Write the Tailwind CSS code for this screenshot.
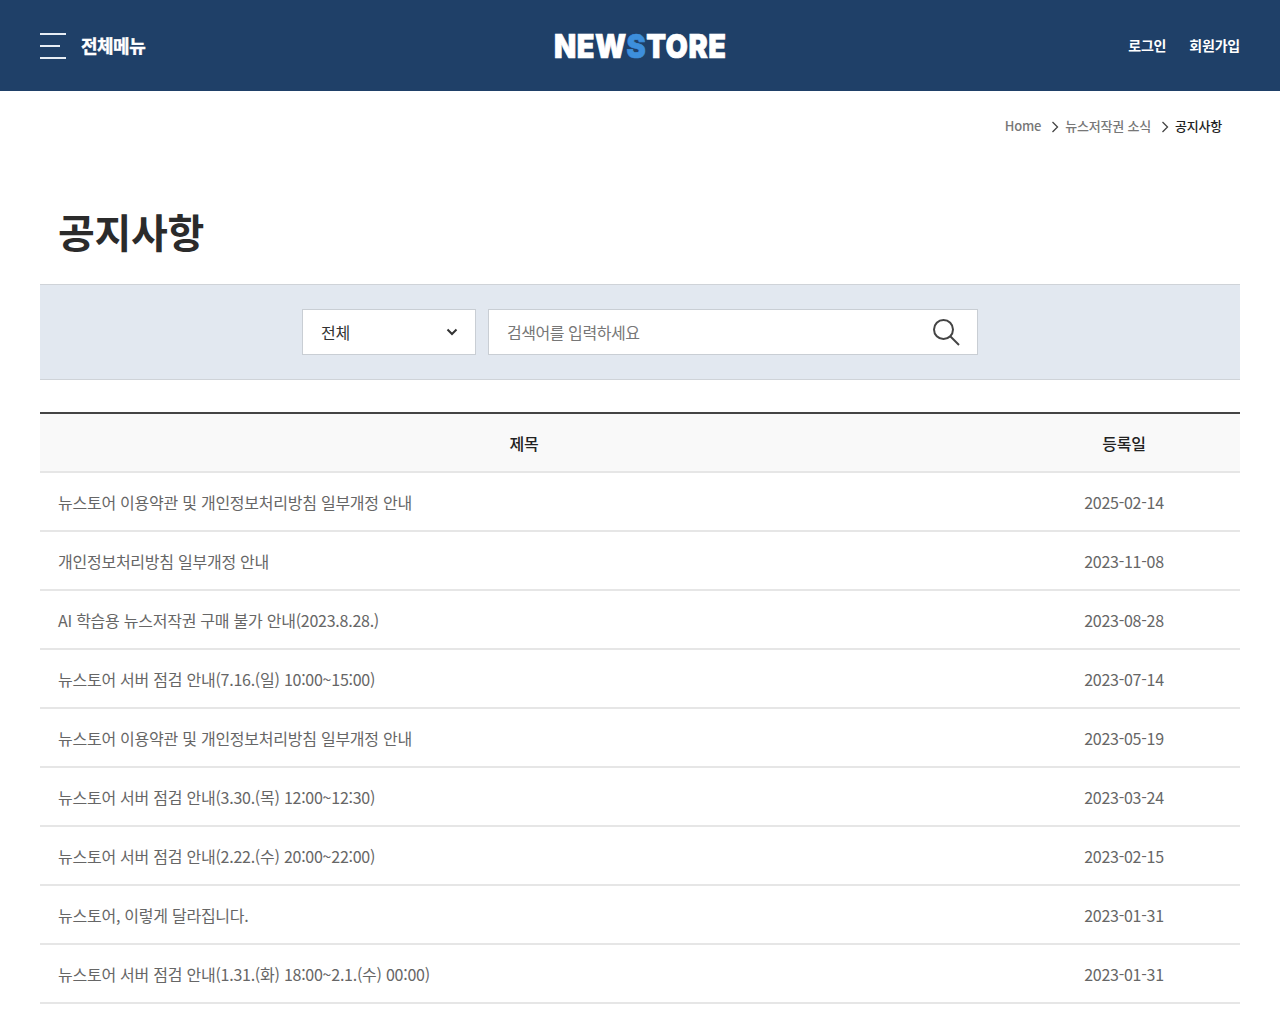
<!DOCTYPE html>
<html lang="ko"><head><meta charset="utf-8"><script src="https://cdn.jsdelivr.net/npm/@tailwindcss/browser@4"></script><title>공지사항</title></head>
<body class="bg-white font-['Noto_Sans_CJK_KR','Noto_Sans',sans-serif] overflow-hidden">
<header class="h-[91px] bg-[#1f4068] px-10 flex items-center justify-between relative">
  <div class="flex items-center gap-[15px]">
    <div class="w-[26px] h-[26px] flex flex-col justify-between">
      <span class="block h-[2px] w-[26px] bg-[#e6edf5]"></span>
      <span class="block h-[2px] w-5 bg-[#e6edf5]"></span>
      <span class="block h-[2px] w-[26px] bg-[#e6edf5]"></span>
    </div>
    <span class="text-white text-[18px] font-bold tracking-[-0.5px] [-webkit-text-stroke:0.4px_white]">전체메뉴</span>
  </div>
  <div class="absolute left-[554px] top-[26px] h-10 leading-10 text-white text-[33px] font-black font-['Inter',sans-serif] tracking-[0.6px] [-webkit-text-stroke:0.7px_white] origin-left scale-x-[0.875]">NEW<span class="text-[#3d8fdc] [-webkit-text-stroke:0.7px_#3d8fdc]">S</span>TORE</div>
  <div class="flex gap-[23px] text-white text-sm font-bold tracking-[-0.2px] -mt-[2px]"><span>로그인</span><span>회원가입</span></div>
</header>
<nav class="h-[70px] pt-[24px] pr-[58px] flex justify-end items-start text-[13px] leading-[22px] tracking-[-0.2px] text-[#777] font-medium">
  <span>Home</span>
  <svg class="w-2 h-[12px] ml-[10px] mr-[6px] mt-[6px]" viewBox="0 0 8 12" fill="none" stroke="#444" stroke-width="1.3"><path d="M1.5 1l5 5-5 5"/></svg>
  <span>뉴스저작권 소식</span>
  <svg class="w-2 h-[12px] ml-[10px] mr-[6px] mt-[6px]" viewBox="0 0 8 12" fill="none" stroke="#444" stroke-width="1.3"><path d="M1.5 1l5 5-5 5"/></svg>
  <span class="text-[#222]">공지사항</span>
</nav>
<main class="px-10">
  <h1 class="pl-[18px] h-[123px] pt-[37px] text-[40px] leading-[66px] font-bold tracking-[-0.3px] text-[#2b2b2b]">공지사항</h1>
  <section class="h-[96px] bg-[#e2e8f0] border-y border-[#cfd3d8] flex justify-center items-center gap-3">
    <div class="w-[174px] h-[46px] bg-white border border-[#c9ced4] pl-[18px] pr-4 flex items-center justify-between text-[16px] text-[#333] tracking-[-0.25px]">
      <span>전체</span>
      <svg class="w-[14px] h-[14px]" viewBox="0 0 14 14" fill="none" stroke="#333" stroke-width="2"><path d="M2.5 4.5L7 9l4.5-4.5"/></svg>
    </div>
    <div class="w-[490px] h-[46px] bg-white border border-[#c9ced4] pl-[18px] pr-[17px] flex items-center justify-between text-[16px] text-[#777] tracking-[-0.45px]">
      <span>검색어를 입력하세요</span>
      <svg class="w-[28px] h-[28px]" viewBox="0 0 28 28" fill="none" stroke="#444" stroke-width="2"><circle cx="11.5" cy="11.5" r="9.5"/><path d="M18.5 18.5l8.5 8.5"/></svg>
    </div>
  </section>
  <table class="w-full mt-8 border-t-2 border-[#444] table-fixed border-collapse text-[16px] tracking-[-0.25px]">
    <colgroup><col class="w-[968px]"><col></colgroup>
    <thead><tr class="h-[59px] bg-[#f9f9f9] border-b-2 border-[#e6e6e6] text-[#222]"><th class="font-medium pt-[1px]">제목</th><th class="font-medium pt-[1px]">등록일</th></tr></thead>
    <tbody class="text-[#666]">
      <tr class="h-[59px] border-b-2 border-[#e6e6e6]"><td class="pl-[18px]">뉴스토어 이용약관 및 개인정보처리방침 일부개정 안내</td><td class="text-center">2025-02-14</td></tr>
      <tr class="h-[59px] border-b-2 border-[#e6e6e6]"><td class="pl-[18px]">개인정보처리방침 일부개정 안내</td><td class="text-center">2023-11-08</td></tr>
      <tr class="h-[59px] border-b-2 border-[#e6e6e6]"><td class="pl-[18px]">AI 학습용 뉴스저작권 구매 불가 안내(2023.8.28.)</td><td class="text-center">2023-08-28</td></tr>
      <tr class="h-[59px] border-b-2 border-[#e6e6e6]"><td class="pl-[18px]">뉴스토어 서버 점검 안내(7.16.(일) 10:00~15:00)</td><td class="text-center">2023-07-14</td></tr>
      <tr class="h-[59px] border-b-2 border-[#e6e6e6]"><td class="pl-[18px]">뉴스토어 이용약관 및 개인정보처리방침 일부개정 안내</td><td class="text-center">2023-05-19</td></tr>
      <tr class="h-[59px] border-b-2 border-[#e6e6e6]"><td class="pl-[18px]">뉴스토어 서버 점검 안내(3.30.(목) 12:00~12:30)</td><td class="text-center">2023-03-24</td></tr>
      <tr class="h-[59px] border-b-2 border-[#e6e6e6]"><td class="pl-[18px]">뉴스토어 서버 점검 안내(2.22.(수) 20:00~22:00)</td><td class="text-center">2023-02-15</td></tr>
      <tr class="h-[59px] border-b-2 border-[#e6e6e6]"><td class="pl-[18px]">뉴스토어, 이렇게 달라집니다.</td><td class="text-center">2023-01-31</td></tr>
      <tr class="h-[59px] border-b-2 border-[#e6e6e6]"><td class="pl-[18px]">뉴스토어 서버 점검 안내(1.31.(화) 18:00~2.1.(수) 00:00)</td><td class="text-center">2023-01-31</td></tr>
    </tbody>
  </table>
</main>
</body></html>
